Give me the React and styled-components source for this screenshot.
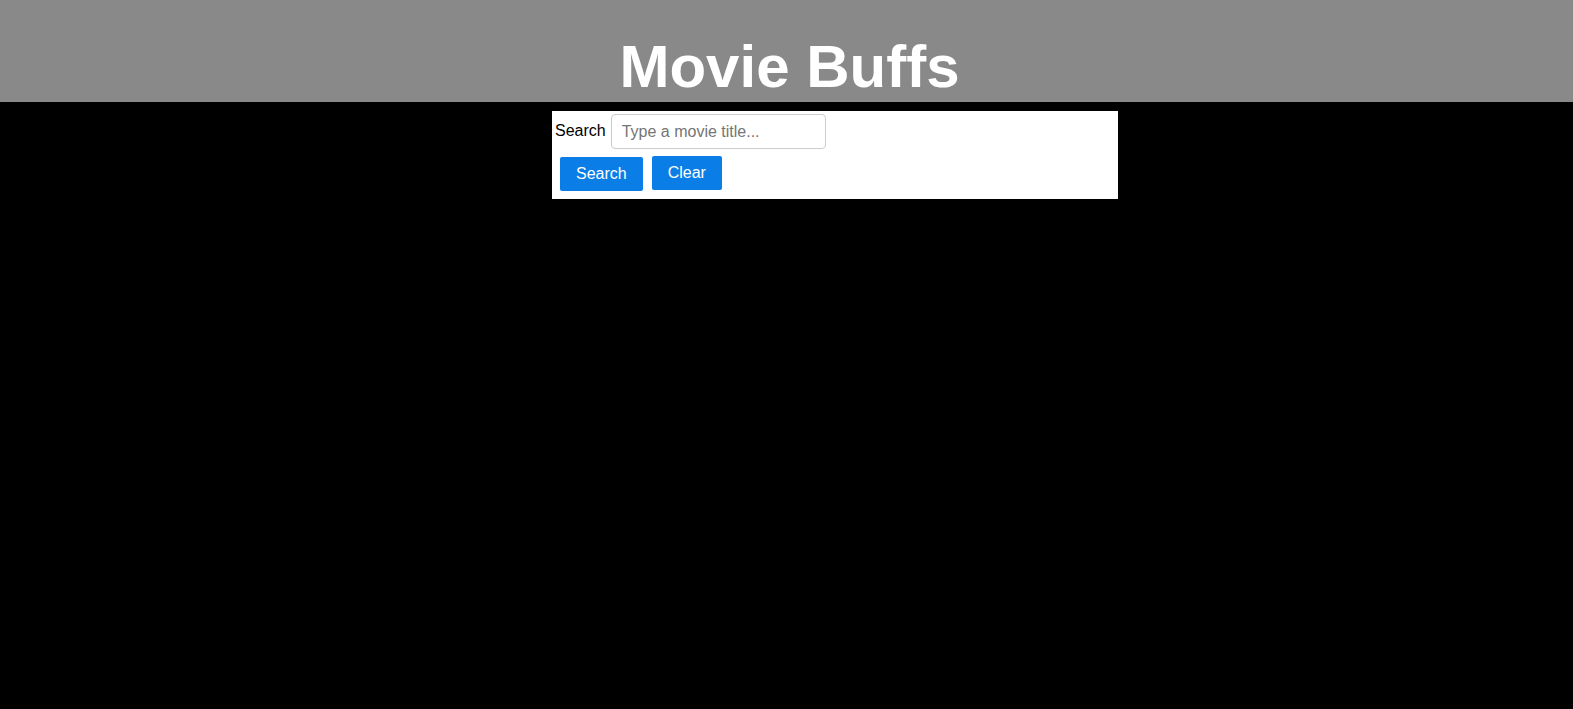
import React from 'react';
import styled, { createGlobalStyle } from 'styled-components';

const GlobalStyle = createGlobalStyle`
  body {
    margin: 0;
    background-color: #000;
    font-family: "Liberation Sans", Arial, sans-serif;
  }
`;

// grey title bar across the top
const Header = styled.header`
  box-sizing: border-box;
  height: 102px;
  padding: 37px 0 0 6px;
  background-color: #898989;
  display: flex;
  justify-content: center;
`;

const Title = styled.h1`
  margin: 0;
  font-size: 60px;
  line-height: 60px;
  font-weight: 700;
  color: #fff;
`;

const Panel = styled.section`
  box-sizing: border-box;
  width: 566px;
  height: 88px;
  margin: 9px 0 0 552px;
  padding: 3px 0 0 3px;
  background-color: #fff;
`;

const Row = styled.div`
  display: flex;
  align-items: ${(p) => (p.$top ? 'flex-start' : 'center')};
  gap: ${(p) => p.$gap || 0}px;
  margin: ${(p) => p.$margin || 0};
`;

const Label = styled.label`
  font-size: 16px;
  color: #000;
  margin-top: -1px;
`;

const Input = styled.input`
  box-sizing: border-box;
  width: 215px;
  height: 35px;
  padding: 0 10px;
  border: 1px solid #ccc;
  border-radius: 4px;
  font-family: "Liberation Sans", Arial, sans-serif;
  font-size: 16px;
  color: #333;
  outline: none;

  &::placeholder {
    color: #757575;
  }
`;

const Button = styled.button`
  box-sizing: border-box;
  height: 34px;
  padding: 0 16px;
  margin-top: ${(p) => (p.$drop ? 1 : 0)}px;
  border: none;
  border-radius: 2px;
  background-color: #0a7ee6;
  color: #fff;
  font-family: "Liberation Sans", Arial, sans-serif;
  font-size: 16px;
  cursor: pointer;
`;

const App = () => {
  return (
    <>
      <GlobalStyle />
      <Header>
        <Title>Movie Buffs</Title>
      </Header>
      <Panel>
        <Row $gap={5}>
          <Label htmlFor="search">Search</Label>
          <Input id="search" type="text" placeholder="Type a movie title..." />
        </Row>
        <Row $top $gap={9} $margin="7px 0 0 5px">
          <Button $drop>Search</Button>
          <Button>Clear</Button>
        </Row>
      </Panel>
    </>
  );
};

export default App;
